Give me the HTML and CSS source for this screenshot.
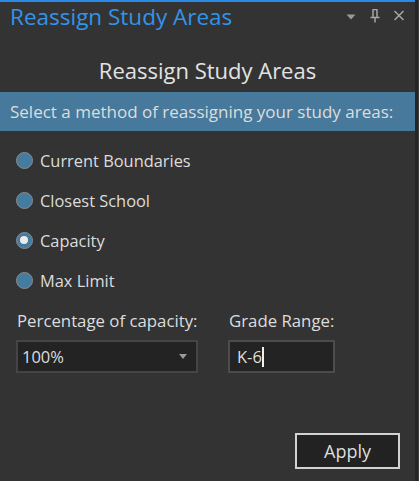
FILE: index.html
```html
<!DOCTYPE html>
<html lang="en">
<head>
<meta charset="utf-8">
<title>Reassign Study Areas</title>
<link rel="stylesheet" href="styles.css">
</head>
<body>
<div class="window">
  <div class="pane">
    <div class="accent"></div>
    <div class="titlebar">
      <span class="pane-title">Reassign Study Areas</span>
      <div class="pane-icons">
        <svg class="icon" viewBox="0 0 14 14" width="14" height="14"><path d="M2.5 5.5 H11.5 L7 10.5 Z" fill="#9a9a9a"/></svg>
        <svg class="icon" viewBox="0 0 14 14" width="14" height="14"><path d="M4.5 0.5 H9.5 M5 0.5 V8.5 M9 0.5 V8.5 M2.5 8.5 H11.5 M7 8.5 V13.5" fill="none" stroke="#a6a6a6" stroke-width="1.5"/></svg>
        <svg class="icon" viewBox="0 0 14 14" width="14" height="14"><path d="M2.5 2 L11.5 11 M11.5 2 L2.5 11" fill="none" stroke="#a6a6a6" stroke-width="1.5"/></svg>
      </div>
    </div>
    <div class="heading">Reassign Study Areas</div>
    <div class="bar">Select a method of reassigning your study areas:</div>
    <div class="options">
      <label class="option"><span class="radio"></span><span>Current Boundaries</span></label>
      <label class="option"><span class="radio"></span><span>Closest School</span></label>
      <label class="option"><span class="radio checked"></span><span>Capacity</span></label>
      <label class="option"><span class="radio"></span><span>Max Limit</span></label>
    </div>
    <div class="fields">
      <div class="field field-pct">
        <div class="field-label">Percentage of capacity:</div>
        <div class="select"><span>100%</span><svg viewBox="0 0 8 5" width="8" height="5"><path d="M0 0 H8 L4 5 Z" fill="#9a9a9a"/></svg></div>
      </div>
      <div class="field field-grade">
        <div class="field-label">Grade Range:</div>
        <div class="textbox"><span>K-6</span><span class="caret"></span></div>
      </div>
    </div>
    <div class="actions">
      <button class="apply" type="button">Apply</button>
    </div>
  </div>
  <div class="edge"></div>
</div>
</body>
</html>
```
FILE: styles.css
```css
html, body {
  margin: 0;
  padding: 0;
  background: #333333;
}
body {
  font-family: "Open Sans", "Noto Sans", "Liberation Sans", sans-serif;
  color: #dcdcdc;
}
.window {
  display: flex;
  width: 419px;
  height: 481px;
  overflow: hidden;
}
.pane {
  width: 415px;
  display: flex;
  flex-direction: column;
  background: #333333;
}
.edge {
  width: 4px;
  background: #262626;
  border-right: 1px solid #3c3c3c;
  box-sizing: border-box;
}
.accent {
  height: 2px;
  background: #2a8ae8;
}
.titlebar {
  height: 38px;
  display: flex;
  justify-content: space-between;
  align-items: flex-start;
  padding: 0 9px 0 10px;
}
.pane-title {
  font-size: 22.5px;
  line-height: 30px;
  color: #3294ea;
}
.pane-icons {
  display: flex;
  gap: 10px;
  margin-top: 7px;
}
.icon {
  display: block;
}
.heading {
  height: 52px;
  box-sizing: border-box;
  padding-top: 16px;
  line-height: 28px;
  font-size: 22px;
  text-align: center;
  color: #e2e2e2;
}
.bar {
  height: 39px;
  line-height: 39px;
  padding: 0 10px;
  background: #46799b;
  font-size: 17px;
  color: #dddddd;
  white-space: nowrap;
}
.options {
  display: flex;
  flex-direction: column;
  gap: 20px;
  padding: 19px 0 0 16px;
}
.option {
  display: flex;
  align-items: center;
  gap: 7px;
  height: 20px;
  font-size: 16.4px;
  color: #dddddd;
}
.radio {
  width: 17px;
  height: 17px;
  box-sizing: border-box;
  border-radius: 50%;
  border: 1.5px solid #8c8c8c;
  background: #467ba0;
  position: relative;
}
.radio.checked::after {
  content: "";
  position: absolute;
  left: 3px;
  top: 3px;
  width: 8px;
  height: 8px;
  border-radius: 50%;
  background: #ececec;
}
.fields {
  display: flex;
  gap: 30px;
  padding: 21px 0 0 16px;
}
.field {
  display: flex;
  flex-direction: column;
  gap: 9px;
}
.field-label {
  font-size: 16.8px;
  line-height: 20px;
  color: #dddddd;
  padding-left: 1px;
  white-space: nowrap;
}
.field-pct .select {
  width: 182px;
}
.select, .textbox {
  height: 33px;
  box-sizing: border-box;
  background: #232323;
  border: 2px solid #454545;
  display: flex;
  align-items: center;
  font-size: 16.5px;
  color: #dddddd;
}
.select {
  justify-content: space-between;
  padding: 0 9px 0 4px;
}
.textbox {
  width: 107px;
  padding-left: 7px;
  border-color: #4c4c4c;
}
.caret {
  width: 2px;
  height: 20px;
  background: #f0f0f0;
}
.actions {
  display: flex;
  justify-content: flex-end;
  padding: 60px 15px 0 0;
}
.apply {
  width: 105px;
  height: 36px;
  box-sizing: border-box;
  background: #222222;
  border: 2px solid #d2d2d2;
  color: #dddddd;
  font-family: inherit;
  font-size: 18px;
  padding: 0;
}
```
